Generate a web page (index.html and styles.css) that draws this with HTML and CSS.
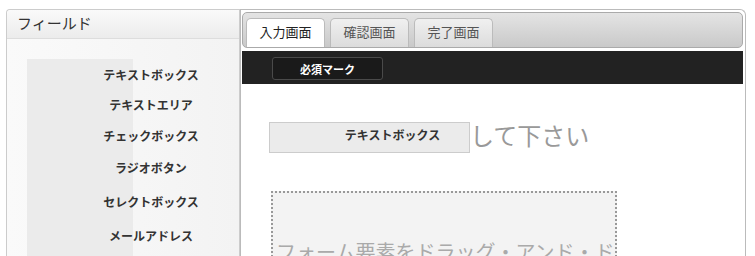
FILE: index.html
```html
<!DOCTYPE html>
<html lang="ja">
<head>
  <meta charset="UTF-8">
  <title>フォーム作成</title>
  <link rel="stylesheet" href="styles.css">
</head>
<body>
  <div class="layout">
    <!-- field palette -->
    <div class="sidebar">
      <div class="sidebar-head">フィールド</div>
      <div class="sidebar-body">
        <ul class="field-list">
          <li>テキストボックス</li>
          <li>テキストエリア</li>
          <li>チェックボックス</li>
          <li>ラジオボタン</li>
          <li>セレクトボックス</li>
          <li>メールアドレス</li>
        </ul>
      </div>
    </div>

    <!-- form editor -->
    <div class="editor">
      <div class="tabbar">
        <div class="tab active">入力画面</div>
        <div class="tab">確認画面</div>
        <div class="tab">完了画面</div>
      </div>
      <div class="toolbar">
        <button class="mark-btn">必須マーク</button>
      </div>
      <div class="canvas">
        <div class="title-row">
          <div class="drag-item">テキストボックス</div>
          <span class="hint">して下さい</span>
        </div>
        <div class="dropzone">
          <p>フォーム要素をドラッグ・アンド・ドロップ</p>
        </div>
      </div>
    </div>
  </div>
</body>
</html>
```

FILE: styles.css
```css
body {
  margin: 0;
  background: #fff;
  font-family: "Liberation Sans", "Noto Sans CJK JP", sans-serif;
  color: #333;
  overflow: hidden;
}
.layout {
  display: flex;
  padding: 9px 9px 0 6px;
  height: 256px;
  box-sizing: border-box;
}
.sidebar {
  width: 232px;
  border: 1px solid #ccc;
  border-bottom: none;
  border-radius: 4px 0 0 0;
  display: flex;
  flex-direction: column;
}
.sidebar-head {
  height: 30px;
  line-height: 28px;
  padding-left: 10px;
  font-size: 15px;
  color: #333;
  background: linear-gradient(#fafafa, #ececec);
  border-bottom: 1px solid #ddd;
  border-radius: 4px 0 0 0;
}
.sidebar-body {
  flex: 1;
  background: linear-gradient(90deg, #fafafa, #f3f3f3);
  padding: 20px 0 0 20px;
}
.field-list {
  list-style: none;
  margin: 0;
  padding: 2px 0 4px;
  width: 106px;
  background: #ebebeb;
}
.field-list li {
  width: 248px;
  height: 34px;
  line-height: 30px;
  text-align: center;
  font-size: 12px;
  font-weight: bold;
  color: #333;
}
.field-list li:nth-child(1) { height: 30px; }
.field-list li:nth-child(2) { height: 31px; }
.field-list li:nth-child(3) { height: 32px; }
.editor {
  flex: 1;
  border: 1px solid #bbb;
  border-bottom: none;
  border-radius: 0 6px 0 0;
  padding: 2px 2px 0 1px;
  display: flex;
  flex-direction: column;
}
.tabbar {
  height: 36px;
  box-sizing: border-box;
  border: 1px solid #aaa;
  border-radius: 5px;
  background: linear-gradient(#e4e4e4, #c9c9c9);
  display: flex;
  align-items: flex-end;
  gap: 5px;
  padding-left: 3px;
}
.tab {
  width: 79px;
  height: 29px;
  box-sizing: border-box;
  border: 1px solid #bbb;
  border-bottom: none;
  border-radius: 5px 5px 0 0;
  background: linear-gradient(#f0f0f0, #dcdcdc);
  text-align: center;
  line-height: 27px;
  font-size: 13px;
  color: #555;
}
.tab.active {
  background: #fff;
  color: #222;
}
.toolbar {
  margin-top: 3px;
  height: 33px;
  background: #222;
  padding: 6px 0 0 30px;
  box-sizing: border-box;
}
.mark-btn {
  width: 111px;
  height: 23px;
  border: 1px solid #4a4a4a;
  border-radius: 3px;
  background: #1a1a1a;
  color: #fff;
  font-family: inherit;
  font-size: 11px;
  font-weight: bold;
  padding: 0;
}
.canvas {
  flex: 1;
  overflow: hidden;
  padding: 38px 0 0 27px;
}
.title-row {
  display: flex;
  align-items: flex-start;
}
.drag-item {
  width: 201px;
  height: 31px;
  box-sizing: border-box;
  border: 1px solid #ccc;
  background: #ebebeb;
  text-align: center;
  font-size: 12px;
  font-weight: bold;
  padding: 3px 0 0 46px;
  color: #333;
}
.hint {
  font-size: 24px;
  color: #999;
  line-height: 28px;
  margin-top: 1px;
}
.dropzone {
  margin: 38px 0 0 2px;
  width: 346px;
  height: 110px;
  box-sizing: border-box;
  border: 2px dotted #999;
  background: #f3f3f3;
  overflow: hidden;
}
.dropzone p {
  margin: 48px 0 0 3px;
  font-size: 20px;
  line-height: 24px;
  color: #aaa;
  white-space: nowrap;
}
```
